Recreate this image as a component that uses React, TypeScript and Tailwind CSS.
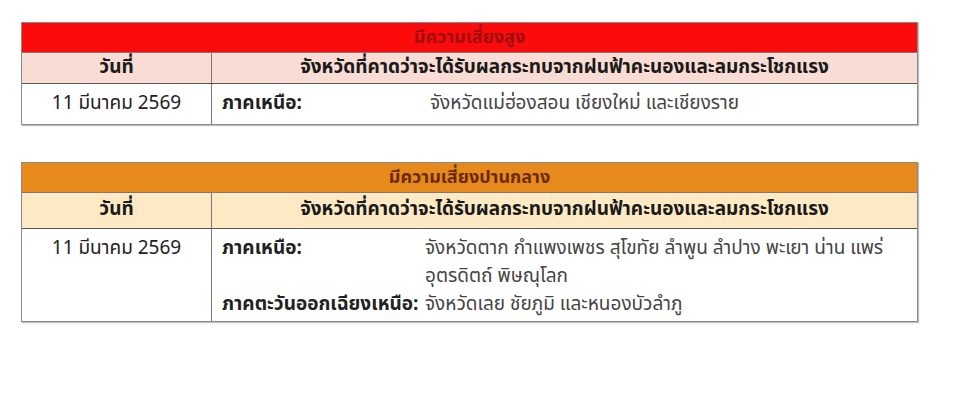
const font = { fontFamily: 'Tahoma, "Noto Sans Thai", "Noto Sans", "DejaVu Sans", sans-serif' };

type Region = { label: string; lines: string[] };

function RiskTable({
  title,
  titleBar,
  titleText,
  headBg,
  headH,
  bodyH,
  bodyPad,
  labelW,
  regions,
}: {
  title: string;
  titleBar: string;
  titleText: string;
  headBg: string;
  headH: string;
  bodyH: string;
  bodyPad: string;
  labelW: string;
  regions: Region[];
}) {
  return (
    <div className="border border-[#8a8a8a] shadow-[1px_1px_1px_rgba(0,0,0,0.25)]">
      <div
        className={`${titleBar} ${titleText} h-[30px] flex items-center justify-center text-[18px] font-bold border-b border-[#7a7a7a]`}
      >
        {title}
      </div>
      <div className={`${headBg} ${headH} flex text-[19px] font-bold text-[#1a1a1a] border-b border-[#555]`}>
        <div className="w-[190px] shrink-0 flex items-center justify-center border-r border-[#777]">วันที่</div>
        <div className="flex-1 flex items-center justify-center">
          จังหวัดที่คาดว่าจะได้รับผลกระทบจากฝนฟ้าคะนองและลมกระโชกแรง
        </div>
      </div>
      <div className={`${bodyH} flex text-[19px] text-[#444] bg-white`}>
        <div className={`w-[190px] shrink-0 border-r border-[#777] ${bodyPad} text-center text-[#222]`}>
          11 มีนาคม 2569
        </div>
        <div className={`flex-1 pl-[10px] pr-1 ${bodyPad}`}>
          {regions.map((r) => (
            <div key={r.label} className="flex">
              <div className={`${labelW} shrink-0 font-bold text-[#222]`}>{r.label}</div>
              <div className="flex flex-col whitespace-nowrap">
                {r.lines.map((l) => (
                  <span key={l}>{l}</span>
                ))}
              </div>
            </div>
          ))}
        </div>
      </div>
    </div>
  );
}

export default function App() {
  return (
    <div className="w-[960px] h-[414px] bg-white pt-[22px] pl-[21px]" style={font}>
      <div className="w-[897px] flex flex-col gap-[37px]">
        <RiskTable
          title="มีความเสี่ยงสูง"
          titleBar="bg-[#fb0b0b]"
          titleText="text-[#9e0f0f]"
          headBg="bg-[#f9dcd3]"
          headH="h-[31px]"
          bodyH="h-[40px]"
          bodyPad="pt-[6px] leading-[27px]"
          labelW="w-[208px]"
          regions={[{ label: "ภาคเหนือ:", lines: ["จังหวัดแม่ฮ่องสอน เชียงใหม่ และเชียงราย"] }]}
        />
        <RiskTable
          title="มีความเสี่ยงปานกลาง"
          titleBar="bg-[#e78a1b]"
          titleText="text-[#6b2a08]"
          headBg="bg-[#fdeac4]"
          headH="h-[36px]"
          bodyH="h-[92px]"
          bodyPad="pt-[6px] leading-[28px]"
          labelW="w-[203px]"
          regions={[
            {
              label: "ภาคเหนือ:",
              lines: ["จังหวัดตาก กำแพงเพชร สุโขทัย ลำพูน ลำปาง พะเยา น่าน แพร่", "อุตรดิตถ์ พิษณุโลก"],
            },
            { label: "ภาคตะวันออกเฉียงเหนือ:", lines: ["จังหวัดเลย ชัยภูมิ และหนองบัวลำภู"] },
          ]}
        />
      </div>
    </div>
  );
}
